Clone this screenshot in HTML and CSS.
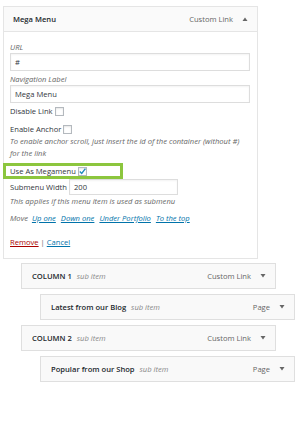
FILE: index.html
```html
<!DOCTYPE html>
<html lang="en">
<head>
    <meta charset="UTF-8">
    <meta name="viewport" content="width=device-width, initial-scale=1.0">
    <title>Menu Item - Mega Menu</title>
    <link rel="stylesheet" href="styles.css">
</head>
<body>

<div class="menu-list">

    <!-- opened item -->
    <div class="menu-item open">
        <div class="item-bar">
            <span class="item-title">Mega Menu</span>
            <span class="item-type">Custom Link</span>
            <svg class="arrow" width="6" height="4" viewBox="0 0 6 4"><path d="M0.5 4 L3 0.5 L5.5 4 Z"/></svg>
        </div>
        <div class="item-settings">
            <div class="field">
                <div class="field-label">URL</div>
                <input class="text" type="text" value="#">
            </div>
            <div class="field">
                <div class="field-label">Navigation Label</div>
                <input class="text" type="text" value="Mega Menu">
            </div>
            <div class="check-row first">Disable Link <span class="box"></span></div>
            <div class="check-row second">Enable Anchor <span class="box"></span></div>
            <div class="desc">To enable anchor scroll, just insert the id of the container (without #) for the link</div>

            <div class="check-row mega">Use As Megamenu <span class="box checked">
                <svg width="9" height="9" viewBox="0 0 9 9"><path d="M1.8 4.6 L3.7 6.5 L7.4 1.6" fill="none" stroke="#1e8cbe" stroke-width="1.4"/></svg>
            </span></div>

            <div class="width-row">Submenu Width <input class="text small" type="text" value="200"></div>
            <div class="desc">This applies if this menu item is used as submenu</div>

            <div class="move">
                <span class="move-label">Move</span>
                <a href="#">Up one</a>
                <a href="#">Down one</a>
                <a href="#">Under Portfolio</a>
                <a href="#">To the top</a>
            </div>

            <div class="actions">
                <a href="#" class="remove">Remove</a> | <a href="#">Cancel</a>
            </div>
        </div>
    </div>

    <!-- closed items -->
    <div class="menu-item sub depth-1">
        <div class="item-bar">
            <span class="item-title">COLUMN 1 <em>sub item</em></span>
            <span class="item-type">Custom Link</span>
            <svg class="arrow" width="6" height="4" viewBox="0 0 6 4"><path d="M0.5 0 L5.5 0 L3 3.5 Z"/></svg>
        </div>
    </div>
    <div class="menu-item sub depth-2">
        <div class="item-bar">
            <span class="item-title">Latest from our Blog <em>sub item</em></span>
            <span class="item-type">Page</span>
            <svg class="arrow" width="6" height="4" viewBox="0 0 6 4"><path d="M0.5 0 L5.5 0 L3 3.5 Z"/></svg>
        </div>
    </div>
    <div class="menu-item sub depth-1">
        <div class="item-bar">
            <span class="item-title">COLUMN 2 <em>sub item</em></span>
            <span class="item-type">Custom Link</span>
            <svg class="arrow" width="6" height="4" viewBox="0 0 6 4"><path d="M0.5 0 L5.5 0 L3 3.5 Z"/></svg>
        </div>
    </div>
    <div class="menu-item sub depth-2">
        <div class="item-bar">
            <span class="item-title">Popular from our Shop <em>sub item</em></span>
            <span class="item-type">Page</span>
            <svg class="arrow" width="6" height="4" viewBox="0 0 6 4"><path d="M0.5 0 L5.5 0 L3 3.5 Z"/></svg>
        </div>
    </div>

</div>

</body>
</html>
```

FILE: styles.css
```css
/* Menu editor */
body {
    margin: 0;
    background: #fff;
    color: #32373c;
    font-family: "Open Sans", "Liberation Sans", sans-serif;
    font-size: 7.6px;
}

.menu-list {
    padding: 6px 0 0 3px;
}

.menu-item {
    box-sizing: border-box;
    border: 1px solid #e5e5e5;
    background: #fff;
}

.menu-item.open {
    width: 255px;
}

/* Titelleiste */
.item-bar {
    display: flex;
    align-items: center;
    height: 24px;
    padding: 0 9px 0 9px;
    background: #fafafa;
}

.open .item-bar {
    border-bottom: 1px solid #e5e5e5;
}

.item-title {
    flex: 1;
    font-weight: 600;
    color: #23282d;
}

.item-title em {
    font-weight: normal;
    color: #888;
    margin-left: 3px;
}

.item-type {
    color: #666;
    margin-right: 9px;
}

.arrow {
    fill: #666;
}

/* Einstellungen */
.item-settings {
    padding: 9px 7px 10px 6px;
}

.field {
    margin-bottom: 2px;
}

.field-label {
    font-style: italic;
    color: #666;
    line-height: 12px;
}

input.text {
    box-sizing: border-box;
    display: block;
    width: 100%;
    height: 18px;
    margin: 0;
    padding: 0 4px;
    border: 1px solid #ddd;
    box-shadow: inset 0 1px 2px rgba(0, 0, 0, 0.05);
    font-family: inherit;
    font-size: 7.6px;
    color: #32373c;
    outline: none;
}

.check-row {
    display: flex;
    align-items: center;
    line-height: 12px;
}

.check-row.first {
    margin-top: 1px;
}

.check-row.second {
    margin-top: 6px;
}

.box {
    box-sizing: border-box;
    display: inline-block;
    width: 9px;
    height: 9px;
    margin-left: 2px;
    border: 1px solid #b4b9be;
    background: #fff;
    box-shadow: inset 0 1px 2px rgba(0, 0, 0, 0.1);
    position: relative;
}

.box svg {
    position: absolute;
    left: -1px;
    top: -1px;
}

.desc {
    font-style: italic;
    color: #666;
    line-height: 12px;
}

/* gruene Markierung */
.check-row.mega {
    width: 120px;
    box-sizing: border-box;
    height: 16px;
    margin: 4px 0 0 -7px;
    padding-left: 4px;
    border: 3px solid #8cc63e;
}

.width-row {
    display: flex;
    align-items: center;
    height: 16px;
}

input.text.small {
    width: 109px;
    height: 16px;
    margin-left: 2px;
    padding-left: 4px;
}

.move {
    margin-top: 5px;
    line-height: 12px;
}

.move-label {
    font-style: italic;
    color: #666;
    margin-right: 2px;
}

a {
    color: #0073aa;
}

.move a {
    font-style: italic;
    margin-right: 3px;
}

.actions {
    margin-top: 12px;
    line-height: 12px;
    color: #666;
}

a.remove {
    color: #a00;
}

/* geschlossene Eintraege */
.menu-item.sub {
    width: 255px;
    margin-top: 5px;
    background: #f9f9f9;
    border-color: #dfdfdf;
}

.sub .item-bar {
    background: #f9f9f9;
    padding-left: 10px;
}

.open + .depth-1 {
    margin-top: 4px;
}

.menu-item.depth-1 {
    margin-left: 18px;
}

.menu-item.depth-2 {
    margin-left: 37px;
}
```
